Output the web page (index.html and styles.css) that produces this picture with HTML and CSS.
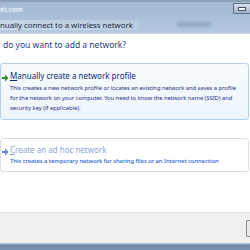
FILE: index.html
```html
<!DOCTYPE html>
<html lang="en">
<head>
    <meta charset="UTF-8">
    <title>Manually connect to a wireless network</title>
    <link rel="stylesheet" href="styles.css">
</head>
<body>

    <div class="window">
        <div class="titlebar">
            <div class="caption-row">
                <span class="caption">et.com</span>
                <span class="min-button"><span class="min-dash"></span></span>
            </div>
            <div class="nav-row">
                <span class="nav-title">nually connect to a wireless network</span>
                <span class="nav-blur"></span>
            </div>
        </div>

        <div class="content">
            <h1 class="instruction">do you want to add a network?</h1>

            <div class="command-link hot">
                <svg class="arrow" width="7" height="8" viewBox="0 0 7 8">
                    <path d="M0 3h3V0.5L6.5 4 3 7.5V5H0z" fill="#3c8a2e"/>
                </svg>
                <div class="command-text">
                    <div class="command-title"><u>M</u>anually create a network profile</div>
                    <div class="command-note">This creates a new network profile or locates an existing network and saves a profile<br>for the network on your computer. You need to know the network name (SSID) and<br>security key (if applicable).</div>
                </div>
            </div>

            <div class="command-link muted">
                <svg class="arrow" width="7" height="8" viewBox="0 0 7 8">
                    <path d="M0 3h3V0.5L6.5 4 3 7.5V5H0z" fill="#5b86d6"/>
                </svg>
                <div class="command-text">
                    <div class="command-title"><u>C</u>reate an ad hoc network</div>
                    <div class="command-note">This creates a temporary network for sharing files or an Internet connection</div>
                </div>
            </div>
        </div>

        <div class="footer">
            <span class="footer-button"></span>
        </div>
        <div class="frame"></div>
    </div>

</body>
</html>
```

FILE: styles.css
```css
    body {
        margin: 0;
        padding: 0;
        font-family: 'Noto Sans', sans-serif;
        background-color: #ffffff;
    }
    .window {
        width: 250px;
        height: 250px;
        overflow: hidden;
        display: flex;
        flex-direction: column;
    }
    .titlebar {
        height: 34px;
        border-top: 2px solid #8c9fb3;
        box-sizing: border-box;
        background: linear-gradient(to bottom, #a2b9d1, #a9c0d8 50%, #b5c9de);
        border-bottom: 1px solid #c9d7e6;
    }
    .caption-row {
        display: flex;
        justify-content: space-between;
        align-items: flex-start;
        height: 15px;
    }
    .caption {
        font-size: 7px;
        color: #f4f8fc;
        line-height: 15px;
        text-shadow: 0 0 3px #dfe9f4;
    }
    .min-button {
        width: 16px;
        height: 9px;
        margin-top: 1px;
        border: 1px solid #5f7188;
        border-right: none;
        border-radius: 2px 0 0 2px;
        background: linear-gradient(to bottom, #d8e2ee, #9fb2c8);
        display: flex;
        justify-content: center;
        align-items: center;
    }
    .min-dash {
        width: 6px;
        height: 2px;
        background-color: #ffffff;
        border: 1px solid #44566c;
    }
    .nav-row {
        height: 15px;
        display: flex;
        align-items: center;
    }
    .nav-title {
        font-size: 7.8px;
        color: #1b2a3f;
        background: linear-gradient(to right, rgba(215, 228, 240, 0.6), rgba(215, 228, 240, 0.25));
        padding-right: 6px;
    }
    .nav-blur {
        width: 34px;
        height: 5px;
        margin-left: 38px;
        border-radius: 3px;
        background-color: rgba(110, 135, 165, 0.45);
        filter: blur(1.5px);
    }
    .content {
        flex: 1;
        padding: 0 1px 0 0;
    }
    .instruction {
        margin: 5px 0 13px 3px;
        font-size: 8.5px;
        font-weight: normal;
        color: #1e3a8f;
    }
    .command-link {
        display: flex;
        align-items: flex-start;
        border: 1px solid transparent;
        border-radius: 3px;
        padding: 4px 0 5px 1px;
        margin-bottom: 18px;
    }
    .command-link.hot {
        border-color: #b2d1ec;
        background: linear-gradient(to bottom, #f7fbfe, #eef5fc);
        padding-top: 5px;
        padding-bottom: 6px;
    }
    .command-link.muted {
        border-color: #d9dfe6;
    }
    .arrow {
        flex: 0 0 7px;
        margin-top: 5px;
        margin-right: 1px;
    }
    .command-title {
        font-size: 8px;
        line-height: 13px;
        color: #142a77;
    }
    .hot .command-title {
        line-height: 14px;
    }
    .command-note {
        font-size: 5.8px;
        letter-spacing: -0.03px;
        line-height: 10px;
        color: #1e3287;
        white-space: nowrap;
    }
    .muted .command-title {
        color: #8aa6dc;
    }
    .muted .command-note {
        color: #1f5fd6;
        font-weight: 500;
    }
    .footer {
        height: 30px;
        background-color: #f0f0f0;
        border-top: 1px solid #dfdfdf;
        display: flex;
        justify-content: flex-end;
        align-items: center;
    }
    .footer-button {
        width: 3px;
        height: 15px;
        border: 1px solid #8d8d8d;
        border-right: none;
        border-radius: 2px 0 0 2px;
        background-color: #e9e9e9;
    }
    .frame {
        height: 7px;
        background: linear-gradient(to bottom, #a8bcd2 0, #a8bcd2 1px, #6f8aa8 2px, #7893b1);
    }
```
